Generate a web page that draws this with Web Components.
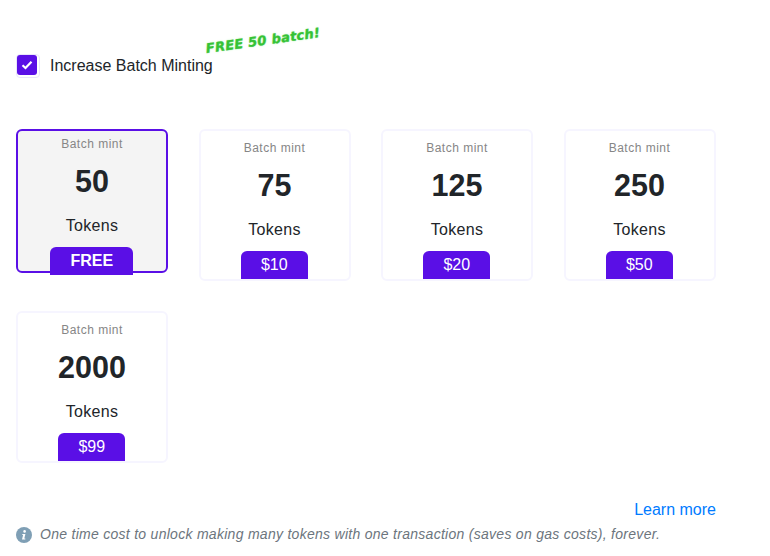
<!DOCTYPE html>
<html>
<head>
<meta charset="utf-8">
<title>Batch minting</title>
<style>
    html, body
    {
        margin: 0;
        background: #fff;
        font-family: "Liberation Sans", Arial, sans-serif;
    }
</style>
</head>
<body>
<batch-panel>
    <batch-toggle slot="toggle">Increase Batch Minting</batch-toggle>
    <batch-card amount="50" price="FREE" selected></batch-card>
    <batch-card amount="75" price="$10"></batch-card>
    <batch-card amount="125" price="$20"></batch-card>
    <batch-card amount="250" price="$50"></batch-card>
    <batch-card amount="2000" price="$99"></batch-card>
    <span slot="link">Learn more</span>
    <span slot="note">One time cost to unlock making many tokens with one transaction (saves on gas costs), forever.</span>
</batch-panel>

<script>
class BatchPanel extends HTMLElement
{
    connectedCallback()
    {
        var shadow = this.attachShadow({mode:"open"});
        shadow.innerHTML =
        `
        <style>
            :host
            {
                display: block;
                width: 770px;
                height: 556px;
                padding: 54px 0 0 16px;
                box-sizing: border-box;
                overflow: hidden;
            }
            .cards
            {
                display: flex;
                flex-wrap: wrap;
                align-items: flex-start;
                align-content: flex-start;
                gap: 30px 30.5px;
                width: 700px;
                height: 333px;
                margin-top: 51px;
            }
            .link
            {
                width: 700px;
                margin-top: 39px;
                text-align: right;
                font-size: 16px;
                line-height: 18px;
                color: #007bff;
            }
            .note
            {
                display: flex;
                align-items: center;
                gap: 8px;
                margin-top: 7px;
                font-size: 14px;
                line-height: 17px;
                letter-spacing: 0.28px;
                font-style: italic;
                color: #6c757d;
            }
            svg
            {
                width: 16px;
                height: 16px;
                flex: none;
            }
        </style>
        <slot name="toggle"></slot>
        <div class="cards"><slot></slot></div>
        <div class="link"><slot name="link"></slot></div>
        <div class="note">
            <svg viewBox="0 0 16 16">
                <circle cx="8" cy="8" r="8" fill="#7f9fb5"/>
                <circle cx="8.6" cy="4.4" r="1.3" fill="#fff"/>
                <path d="M6.4 7h3l-1.1 4.6h1v1H6l1.1-4.6H6.2z" fill="#fff"/>
            </svg>
            <slot name="note"></slot>
        </div>
        `
    }
}

class BatchToggle extends HTMLElement
{
    connectedCallback()
    {
        var shadow = this.attachShadow({mode:"open"});
        shadow.innerHTML =
        `
        <style>
            :host
            {
                display: flex;
                align-items: center;
                gap: 10px;
                position: relative;
                height: 24px;
                font-size: 16px;
                color: #212529;
            }
            .box
            {
                display: flex;
                width: 24px;
                height: 24px;
                box-sizing: border-box;
                border: 1px solid #e9e6fb;
                border-radius: 4px;
                flex: none;
            }
            .fill
            {
                display: flex;
                align-items: center;
                justify-content: center;
                width: 20px;
                height: 20px;
                background: #5a0fe6;
                border-radius: 3px;
            }
            .promo
            {
                position: absolute;
                left: 191px;
                top: -13px;
                font-family: "DejaVu Sans", sans-serif;
                font-size: 13px;
                font-weight: bold;
                font-style: italic;
                letter-spacing: 0.3px;
                white-space: nowrap;
                color: #35c235;
                -webkit-text-stroke: 0.3px #35c235;
                text-shadow: 0 0 2px #a8eea8;
                transform: rotate(-8deg);
                transform-origin: left bottom;
            }
        </style>
        <span class="box">
            <span class="fill">
                <svg width="12" height="10" viewBox="0 0 12 10">
                    <path d="M1.5 5.2 4.5 8 10.5 1.8" fill="none" stroke="#fff" stroke-width="2.2"/>
                </svg>
            </span>
        </span>
        <span><slot></slot></span>
        <span class="promo">FREE 50 batch!</span>
        `
    }
}

class BatchCard extends HTMLElement
{
    connectedCallback()
    {
        var shadow = this.attachShadow({mode:"open"});
        shadow.innerHTML =
        `
        <style>
            :host
            {
                display: flex;
                flex-direction: column;
                align-items: center;
                width: 152px;
                height: 152px;
                box-sizing: border-box;
                border: 2px solid #f6f5ff;
                border-radius: 6px;
                padding-top: 10px;
                color: #212529;
                text-align: center;
            }
            :host([selected])
            {
                height: 144px;
                border-color: #5a0fe6;
                background: #f4f4f4;
                padding-top: 6px;
            }
            .label
            {
                font-size: 12px;
                line-height: 14px;
                letter-spacing: 0.5px;
                color: #868686;
            }
            .amount
            {
                font-size: 30.5px;
                line-height: 36px;
                font-weight: bold;
                margin-top: 12px;
            }
            .unit
            {
                font-size: 16px;
                line-height: 18px;
                letter-spacing: 0.3px;
                margin-top: 18px;
            }
            .price
            {
                flex: none;
                min-width: 67px;
                box-sizing: border-box;
                margin-top: 12px;
                margin-right: 0.4px;
                height: 28px;
                line-height: 28px;
                font-size: 16px;
                color: #fff;
                background: #5a0fe6;
                border-radius: 6px 6px 0 0;
            }
            :host([selected]) .price
            {
                min-width: 83px;
                font-weight: bold;
            }
        </style>
        <div class="label">Batch mint</div>
        <div class="amount">${this.getAttribute("amount")}</div>
        <div class="unit">Tokens</div>
        <div class="price">${this.getAttribute("price")}</div>
        `
    }
}

customElements.define("batch-panel", BatchPanel);
customElements.define("batch-toggle", BatchToggle);
customElements.define("batch-card", BatchCard);
</script>
</body>
</html>
